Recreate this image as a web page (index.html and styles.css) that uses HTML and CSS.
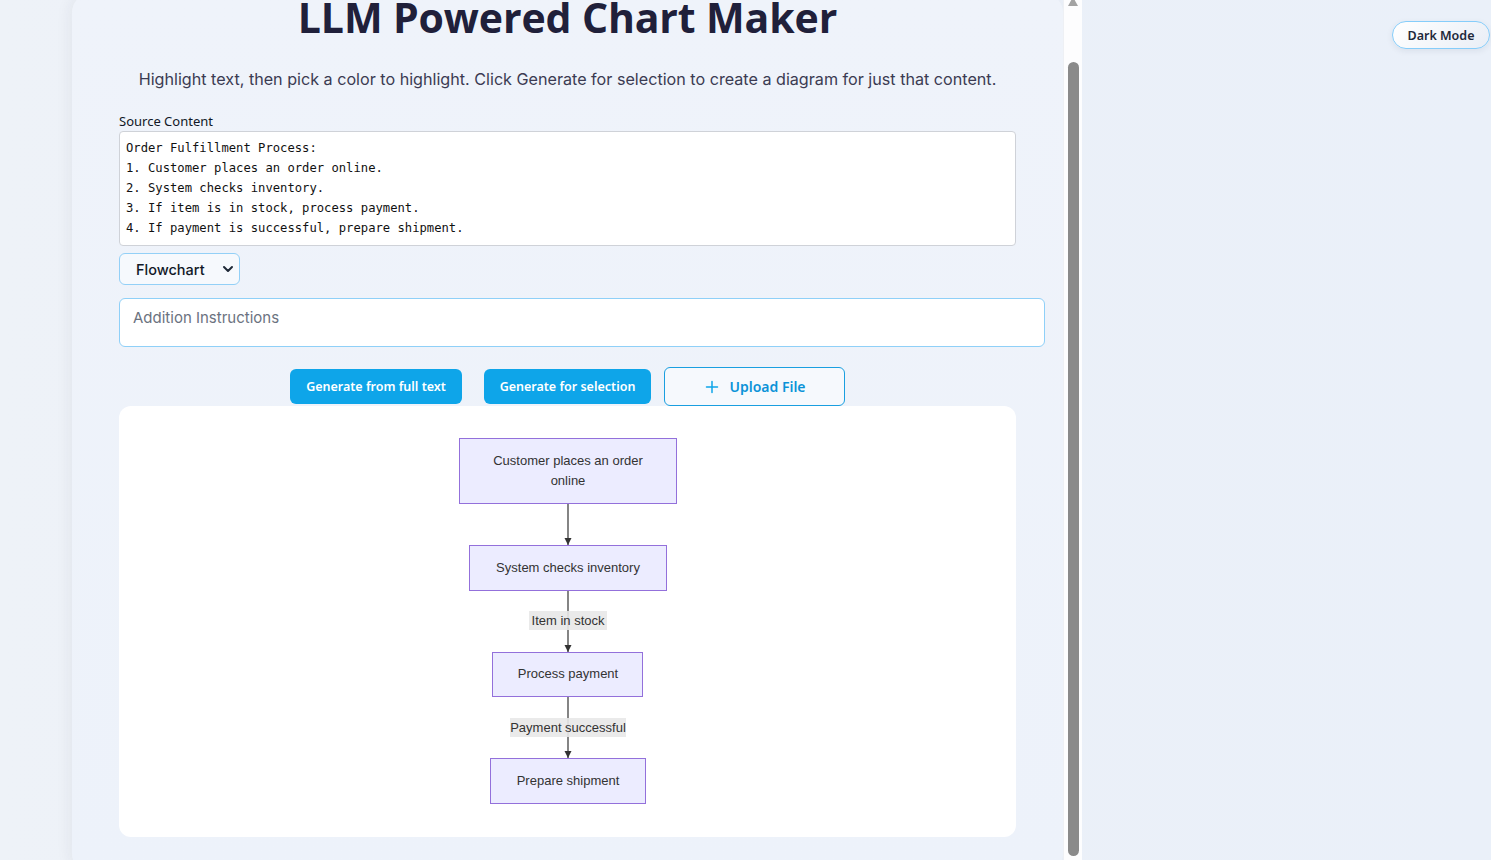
FILE: index.html
```html
<!DOCTYPE html>
<html lang="en">
<head>
<meta charset="utf-8">
<title>LLM Powered Chart Maker</title>
<link rel="stylesheet" href="styles.css">
</head>
<body>
<div class="page">
  <div class="viewport">
    <main class="card">
      <h1 class="title">LLM Powered Chart Maker</h1>
      <p class="intro">Highlight text, then pick a color to highlight. Click Generate for selection to create a diagram for just that content.</p>
      <div class="field-label">Source Content</div>
      <div class="source">Order Fulfillment Process:
1. Customer places an order online.
2. System checks inventory.
3. If item is in stock, process payment.
4. If payment is successful, prepare shipment.</div>
      <div class="select">
        <span class="select-text">Flowchart</span>
        <svg class="chev" width="12" height="8" viewBox="0 0 12 8"><path d="M2 2l4 4 4-4" fill="none" stroke="#1f2937" stroke-width="2" stroke-linecap="round" stroke-linejoin="round"/></svg>
      </div>
      <textarea class="instructions" placeholder="Addition Instructions"></textarea>
      <div class="actions">
        <button class="btn btn-primary btn-full">Generate from full text</button>
        <button class="btn btn-primary btn-sel">Generate for selection</button>
        <button class="btn btn-upload">
          <svg width="14" height="14" viewBox="0 0 14 14"><path d="M7 1.5v11M1.5 7h11" stroke="#0ea5e9" stroke-width="1.5" stroke-linecap="round"/></svg>
          <span>Upload File</span>
        </button>
      </div>
      <div class="diagram">
        <svg class="flow" width="220" height="370" viewBox="0 0 220 370">
          <defs>
            <marker id="arrow" viewBox="0 0 10 10" refX="10" refY="5" markerWidth="6" markerHeight="6" orient="auto">
              <path d="M0 0L10 5L0 10z" fill="#333"/>
            </marker>
          </defs>
          <g class="edges">
            <line x1="110" y1="67" x2="110" y2="108" marker-end="url(#arrow)"/>
            <line x1="110" y1="154" x2="110" y2="215" marker-end="url(#arrow)"/>
            <line x1="110" y1="260" x2="110" y2="321" marker-end="url(#arrow)"/>
          </g>
          <rect class="lbl" x="71" y="174" width="78" height="19"/>
          <text class="etext" x="110" y="188">Item in stock</text>
          <rect class="lbl" x="52" y="281" width="116" height="19"/>
          <text class="etext" x="110" y="295">Payment successful</text>
          <rect class="node" x="1.5" y="1.5" width="217" height="65"/>
          <text class="ntext" x="110" y="28">Customer places an order</text>
          <text class="ntext" x="110" y="48">online</text>
          <rect class="node" x="11.5" y="108.5" width="197" height="45"/>
          <text class="ntext" x="110" y="135">System checks inventory</text>
          <rect class="node" x="34.5" y="215.5" width="150" height="44"/>
          <text class="ntext" x="110" y="241">Process payment</text>
          <rect class="node" x="32.5" y="321.5" width="155" height="45"/>
          <text class="ntext" x="110" y="348">Prepare shipment</text>
        </svg>
      </div>
    </main>
    <div class="scrollbar">
      <div class="sb-arrow"></div>
      <div class="sb-thumb"></div>
    </div>
  </div>
  <aside class="side">
    <button class="mode">Dark Mode</button>
  </aside>
</div>
</body>
</html>
```

FILE: styles.css
```css
* { box-sizing: border-box; }
html, body { margin: 0; padding: 0; height: 100%; overflow: hidden; }
body {
  background: linear-gradient(90deg, #eef2f8 0%, #ebf0f8 60%, #eaf0f9 100%);
  font-family: "Noto Sans", "Open Sans", sans-serif;
  color: #1f2937;
}
.page { display: flex; height: 860px; }
.viewport { display: flex; margin-left: 72px; height: 860px; }
.card {
  width: 991px;
  height: 880px;
  margin-top: -7px;
  padding: 0 47px;
  background: linear-gradient(180deg, #eff3fa 0%, #edf2fa 100%);
  border-radius: 20px;
  box-shadow: -4px 0 14px rgba(30, 41, 59, 0.05);
}
.title {
  margin: 0;
  font-family: "Open Sans", sans-serif;
  font-weight: 700;
  font-size: 41px;
  line-height: 48px;
  text-align: center;
  color: #20203a;
  letter-spacing: -0.12px;
}
.intro {
  margin: 26px 0 0;
  font-family: Inter, sans-serif;
  font-size: 16.15px;
  line-height: 24px;
  text-align: center;
  color: #3b3b52;
}
.field-label {
  margin-top: 21px;
  font-size: 13px;
  line-height: 18px;
  color: #111827;
}
.source {
  margin-top: 1px;
  width: 897px;
  height: 115px;
  background: #fff;
  border: 1px solid #cfd2d8;
  border-radius: 4px;
  padding: 6px 6px 8px;
  font-family: "DejaVu Sans Mono", monospace;
  font-size: 12.2px;
  line-height: 20px;
  white-space: pre;
  color: #111;
}
.select {
  margin-top: 7px;
  width: 121px;
  height: 32px;
  display: flex;
  align-items: center;
  justify-content: space-between;
  padding: 0 5px 0 16px;
  border: 1px solid #93d0f7;
  border-radius: 6px;
  background: #f6f9fd;
}
.select-text {
  font-family: Inter, sans-serif;
  font-size: 14.5px;
  font-weight: 500;
  color: #111827;
}
.instructions {
  display: block;
  margin: 13px 0 0;
  width: 926px;
  height: 49px;
  padding: 9px 13px;
  border: 1px solid #8fd0f8;
  border-radius: 6px;
  background: #fff;
  resize: none;
  font-family: Inter, sans-serif;
  font-size: 15px;
  line-height: 20px;
  outline: none;
}
.instructions::placeholder { color: #6b7280; }
.actions {
  display: flex;
  justify-content: center;
  align-items: center;
  margin-top: 20px;
  height: 39px;
}
.btn {
  font-family: "Noto Sans", sans-serif;
  font-size: 12.5px;
  font-weight: 600;
  border-radius: 6px;
  cursor: pointer;
}
.btn-primary {
  height: 35px;
  border: none;
  background: #0ea5e9;
  color: #fff;
  padding: 0;
}
.btn-full { width: 172px; }
.btn-sel { width: 167px; margin-left: 22px; }
.btn-upload {
  width: 181px;
  height: 39px;
  margin-left: 13px;
  display: flex;
  align-items: center;
  justify-content: center;
  gap: 10px;
  border: 1px solid #1a9fe0;
  background: #f6f9fd;
  color: #0b93d8;
  padding: 0 0 0 2px;
  font-size: 14px;
  font-weight: 600;
}
.diagram {
  height: 431px;
  width: 897px;
  background: #fff;
  border-radius: 12px;
  display: flex;
  justify-content: center;
  padding-top: 31px;
}
.flow { display: block; margin-left: 1px; }
.edges line { stroke: #333; stroke-width: 1.2; }
.node { fill: #ececff; stroke: #9370db; stroke-width: 1; }
.lbl { fill: #e8e8e8; opacity: 0.9; }
.ntext, .etext {
  font-family: "Liberation Sans", Arial, sans-serif;
  font-size: 13px;
  fill: #333;
  text-anchor: middle;
}
.scrollbar {
  width: 19px;
  height: 860px;
  background: #fdfdfe;
  border-left: 1px solid #eef0f4;
  display: flex;
  flex-direction: column;
  align-items: center;
}
.sb-arrow {
  width: 0;
  height: 0;
  margin-top: -3px;
  border-left: 5px solid transparent;
  border-right: 5px solid transparent;
  border-bottom: 9px solid #a3a3a3;
}
.sb-thumb {
  margin-top: 56px;
  width: 11px;
  height: 794px;
  background: #8a8a8a;
  border-radius: 6px;
}
.side {
  flex: 1;
  display: flex;
  justify-content: flex-end;
  align-items: flex-start;
  padding: 21px 1px 0 0;
}
.mode {
  height: 28px;
  width: 98px;
  border: 1px solid #86cdfa;
  border-radius: 14px;
  background: linear-gradient(135deg, #ffffff 0%, #e9eef6 100%);
  box-shadow: 0 2px 6px rgba(30, 41, 59, 0.08);
  font-family: "Noto Sans", sans-serif;
  font-size: 12.5px;
  font-weight: 600;
  color: #1e293b;
  padding: 0;
}
```
